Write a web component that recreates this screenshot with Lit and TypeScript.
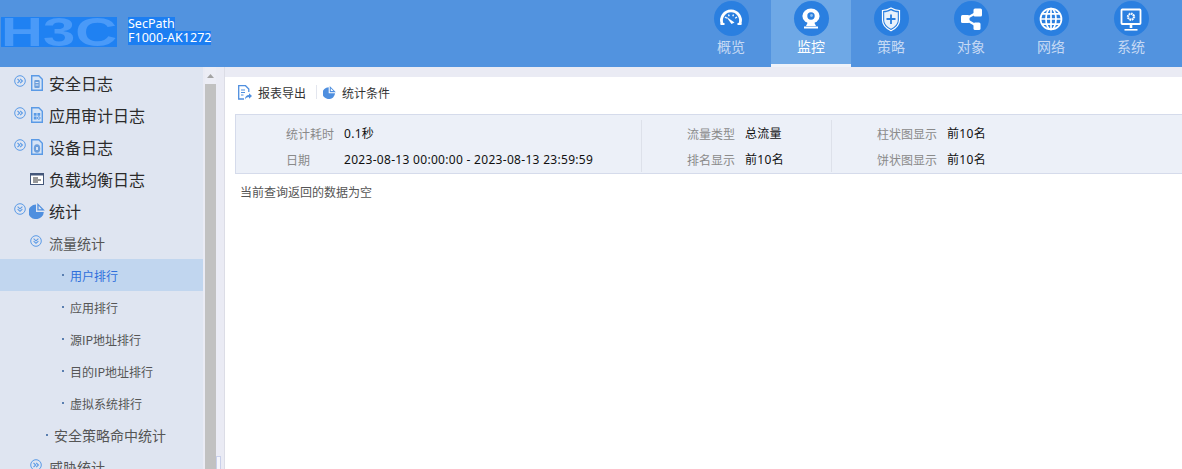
import { LitElement, html, css, svg } from "lit";
import { customElement } from "lit/decorators.js";

const navIcons: Record<string, any> = {
  gauge: svg`<path d="M6 19.500 A9.500 9.500 0 1 1 24 19.500" fill="none" stroke="#fff" stroke-width="2.800"/><path d="M4.500 20 H8.500 M21.500 20 H25.500" stroke="#fff" stroke-width="1.800"/><path d="M9 13 l1.800 1.300 M12.500 10.500 l0.700 1.800 M17.500 10.500 l-0.700 1.800 M21 13 l-1.800 1.300" stroke="#fff" stroke-width="1.300"/><path d="M10 12.500 L18.500 18.500 L15.500 20 Z" fill="#fff"/>`,
  cam: svg`<ellipse cx="15" cy="12" rx="8.600" ry="7.500" fill="#fff"/><circle cx="15" cy="12" r="3.700" fill="#2a7fe0"/><circle cx="15.500" cy="11.500" r="1.400" fill="#8fc0f2"/><path d="M11.500 19 h7 l1.500 3 h-10 Z" fill="#fff"/><rect x="8" y="22.500" width="14" height="2" fill="#fff"/>`,
  shield: svg`<path d="M15 4 C18 5.800 20.500 6.500 23.500 6.500 V16 C23.500 21 19.500 24.500 15 26.800 C10.500 24.500 6.500 21 6.500 16 V6.500 C9.500 6.500 12 5.800 15 4 Z" fill="none" stroke="#fff" stroke-width="1.200"/><path d="M15 6.300 C17.800 7.700 19.800 8.300 21.800 8.300 V16 C21.800 20 18.600 22.800 15 24.800 C11.400 22.800 8.200 20 8.200 16 V8.300 C10.200 8.300 12.200 7.700 15 6.300 Z" fill="#e8f1fb"/><path d="M15 10.500 V20 M10.500 15 H19.500" stroke="#2a7fe0" stroke-width="1.800"/>`,
  share: svg`<path d="M21 8.500 L9 15 L21 22" fill="none" stroke="#fff" stroke-width="2.200"/><rect x="17.500" y="4.500" width="8.500" height="8" rx="1.500" fill="#fff"/><rect x="5" y="11" width="8.500" height="8" rx="1.500" fill="#fff"/><rect x="17.500" y="18.500" width="7" height="7.500" rx="1.500" fill="#fff"/>`,
  globe: svg`<g fill="none" stroke="#fff" stroke-width="1.700"><circle cx="15" cy="15" r="10.500"/><ellipse cx="15" cy="15" rx="5" ry="10.500"/><path d="M15 4.500 V25.500 M4.500 15 H25.500 M6 9.800 H24 M6 20.200 H24"/></g>`,
  monitor: svg`<rect x="5.500" y="5.500" width="19" height="14.500" rx="0.800" fill="none" stroke="#fff" stroke-width="1.800"/><circle cx="15" cy="12.700" r="2.800" fill="none" stroke="#fff" stroke-width="1.800" stroke-dasharray="1.600 0.500"/><circle cx="15" cy="12.700" r="3.700" fill="none" stroke="#fff" stroke-width="1" stroke-dasharray="1.500 1.400"/><path d="M15 20 V24" stroke="#fff" stroke-width="2.600"/><rect x="8.500" y="25" width="13" height="1.600" fill="#fff"/>`,
};

const tabs = [
  ["概览", "gauge", false],
  ["监控", "cam", true],
  ["策略", "shield", false],
  ["对象", "share", false],
  ["网络", "globe", false],
  ["系统", "monitor", false],
] as const;

const arrowRight = svg`<svg width="12" height="12" viewBox="0 0 12 12"><circle cx="6" cy="6" r="5.300" fill="none" stroke="#5a9ae6" stroke-width="1"/><path d="M3.500 3.800 L5.700 6 L3.500 8.200 M6.200 3.800 L8.400 6 L6.200 8.200" fill="none" stroke="#5a9ae6" stroke-width="1.100"/></svg>`;
const arrowDown = svg`<svg width="12" height="12" viewBox="0 0 12 12"><circle cx="6" cy="6" r="5.300" fill="none" stroke="#5a9ae6" stroke-width="1"/><path d="M3.600 3.700 L6 5.800 L8.400 3.700 M3.600 6.200 L6 8.300 L8.400 6.200" fill="none" stroke="#5a9ae6" stroke-width="1.100"/></svg>`;

const docBase = svg`<path d="M0.700 0.700 H7.800 L11.300 4.200 V15.300 H0.700 Z" fill="#d6e4f6" stroke="#5a9ae6" stroke-width="1.400"/>`;
const docIcons: Record<string, any> = {
  shield: svg`<svg width="12" height="16" viewBox="0 0 12 16">${docBase}<rect x="3.300" y="5" width="5.400" height="8" rx="1" fill="#6d9fdc"/><path d="M4.500 7.500 H7.500 M4.500 10 H7.500" stroke="#dfe8f6"/></svg>`,
  grid: svg`<svg width="12" height="16" viewBox="0 0 12 16">${docBase}<path d="M2.800 6 h2.800 v2.800 h-2.800 Z M6.400 6 h2.800 v2.800 h-2.800 Z M2.800 9.600 h2.800 v2.800 h-2.800 Z" fill="#5a9ae6"/><circle cx="7.800" cy="11" r="1.300" fill="none" stroke="#5a9ae6"/></svg>`,
  lock: svg`<svg width="12" height="16" viewBox="0 0 12 16">${docBase}<ellipse cx="6" cy="9.500" rx="3.200" ry="4.300" fill="#6d9fdc"/><rect x="5" y="8" width="2" height="3" fill="#d6e4f6"/></svg>`,
  lb: svg`<svg width="14" height="12" viewBox="0 0 14 12"><rect x="0.500" y="0.500" width="13" height="11" fill="#fff" stroke="#44577a"/><rect x="0.500" y="0.500" width="13" height="2" fill="#44577a"/><path d="M3 5 H8 M3 7 H11 M3 9 H8" stroke="#333" stroke-width="1"/></svg>`,
};
const pie = (size: number, notch: string) => svg`<svg width="${size}" height="${size}" viewBox="0 0 16 16"><path d="M7 1.500 V9 H14.800 A7.700 7.300 0 1 1 7 1.500 Z" fill="#4f8fdf"/><path d="M8.300 0 L15.800 7.600 H8.300 Z" fill="#4f8fdf"/><path d="M9.600 2.800 L12.800 6.300 H9.600 Z" fill="${notch}"/></svg>`;

const exportIcon = svg`<svg width="14" height="15" viewBox="0 0 14 15"><path d="M6 14 H0.700 V0.700 H7.500 L10.800 4 V7" fill="none" stroke="#4f8fdf" stroke-width="1.300"/><path d="M3 5 H7 M3 7.500 H7 M3 10 H5.500" stroke="#4f8fdf" stroke-width="1.100"/><path d="M7 14.500 C7 11.500 8.500 10 11 10 V8.300 L14 11 L11 13.700 V12 C9.500 12 8 12.700 7 14.500 Z" fill="#4f8fdf"/></svg>`;

@customElement("app-root")
export class AppRoot extends LitElement {
  static styles = css`
    :host {
      display: block;
      position: relative;
      width: 1182px;
      height: 469px;
      overflow: hidden;
      font-family: "Noto Sans CJK SC", "Liberation Sans", sans-serif;
      background: #eaebf4;
    }
    .header {
      height: 67px;
      background: #5293df;
      display: flex;
      justify-content: space-between;
    }
    .brand {
      display: flex;
      align-items: flex-start;
      padding: 17px 0 0 1px;
      gap: 11px;
    }
    .logo {
      width: 116px;
      height: 30px;
      background: #1f81f2;
    }
    .logo span {
      display: block;
      width: 80px;
      transform: scaleX(1.45);
      transform-origin: left;
      color: #4a9af8;
      font: 700 40px/30px "Liberation Sans", sans-serif;
      white-space: nowrap;
    }
    .model {
      font: 12.500px/14px "Noto Sans", "Liberation Sans", sans-serif;
      color: #fff;
      display: flex;
      flex-direction: column;
      align-items: flex-start;
    }
    .model span {
      background: #1c7ef2;
      height: 14px;
      line-height: 14px;
    }
    .tabs {
      display: flex;
      margin-right: 11px;
    }
    .tab {
      width: 80px;
      height: 67px;
      box-sizing: border-box;
      display: flex;
      flex-direction: column;
      align-items: center;
      padding-top: 1px;
      color: #c5d9f4;
      font-size: 14px;
      line-height: 20px;
    }
    .tab.on {
      background: #6ea8e6;
      color: #fff;
      border-bottom: 3px solid #eef2fa;
    }
    .tab .disc {
      width: 35px;
      height: 35px;
      border-radius: 50%;
      background: #2a7fe0;
      display: flex;
      align-items: center;
      justify-content: center;
    }
    .body {
      display: flex;
      height: 402px;
    }
    .side {
      width: 203px;
      flex: none;
      background: #dfe5f1;
      overflow: hidden;
      box-sizing: border-box;
    }
    .row {
      height: 32px;
      display: flex;
      align-items: center;
      white-space: nowrap;
    }
    .row.l1 { font-size: 16px; color: #2b2b2b; }
    .row.l2 { font-size: 14px; color: #555; }
    .row.l3 { font-size: 12px; color: #555; }
    .row.active { background: #c1d6ef; color: #2f6fdc; }
    .chev { display: flex; width: 12px; height: 12px; margin-top: -4px; flex: none; }
    .ic { display: flex; justify-content: center; width: 16px; flex: none; margin-left: 3px; }
    .dot {
      width: 2px;
      height: 2px;
      background: #5a7fb0;
      flex: none;
      margin-right: 6px;
    }
    .gutter { width: 2px; flex: none; background: #eaebf4; }
    .bar {
      width: 11px;
      flex: none;
      background: #ecedf5;
      display: flex;
      flex-direction: column;
      align-items: stretch;
    }
    .bar .up {
      height: 17px;
      display: flex;
      justify-content: center;
      padding-top: 7px;
      box-sizing: border-box;
    }
    .bar .thumb { height: 385px; background: #c1c1c1; }
    .rail { width: 9px; flex: none; background: #eaebf4; border-right: 1px solid #dcdde6; box-sizing: border-box; }
    .main {
      flex: 1;
      margin-top: 10px;
      background: #fff;
      min-width: 0;
    }
    .tools {
      height: 30px;
      display: flex;
      align-items: center;
      padding-left: 13px;
      font-size: 12px;
      color: #333;
    }
    .tools .t { display: flex; align-items: center; gap: 6px; }
    .tools .sep { width: 1px; height: 14px; background: #e3e6ee; margin: 0 6px 0 10px; }
    .info {
      margin: 7px 0 0 10px;
      height: 60px;
      box-sizing: border-box;
      background: #ecf0f8;
      border: 1px solid #d5dbeb;
      border-right: none;
      display: flex;
      padding: 5px 0 1px;
      font-size: 12px;
    }
    .col {
      display: grid;
      grid-auto-rows: 26px;
      align-items: center;
      align-content: center;
      box-sizing: border-box;
    }
    .col.a { width: 405px; grid-template-columns: 98px 1fr; column-gap: 10px; }
    .col.b { width: 190px; grid-template-columns: 93px 1fr; column-gap: 10px; border-left: 1px solid #dde1ea; }
    .col.c { grid-template-columns: 105px 1fr; column-gap: 10px; border-left: 1px solid #dde1ea; }
    .k { color: #8a8a8a; text-align: right; }
    .col.a .k.d { text-align: left; padding-left: 50px; }
    .v {
      color: #111;
      white-space: nowrap;
      font-family: "Noto Sans", "Noto Sans CJK SC", sans-serif;
      letter-spacing: 0.300px;
    }
    .empty { margin: 10px 0 0 15px; font-size: 12px; line-height: 16px; color: #555; }
    .corner {
      position: absolute;
      left: 216px;
      top: 456px;
      width: 5px;
      height: 13px;
      box-sizing: border-box;
      border: 1px solid #c9d0ea;
      border-bottom: none;
      background: #f4f5fb;
    }
  `;

  private navRow(cls: string, pad: number, chev: any, icon: any, text: string, gap = 0) {
    return html`<div class="row ${cls}" style="padding-left:${pad}px">
      ${chev ? html`<span class="chev">${chev}</span>` : html`<span class="chev"></span>`}
      ${icon ? html`<span class="ic">${icon}</span>` : ""}
      <span style="margin-left:${gap}px">${text}</span>
    </div>`;
  }

  private leaf(pad: number, text: string, cls = "l3", active = false) {
    return html`<div class="row ${cls} ${active ? "active" : ""}" style="padding-left:${pad}px">
      <span class="dot"></span><span>${text}</span>
    </div>`;
  }

  render() {
    return html`
      <div class="header">
        <div class="brand">
          <div class="logo"><span>H3C</span></div>
          <div class="model"><span>SecPath</span><span>F1000-AK1272</span></div>
        </div>
        <div class="tabs">
          ${tabs.map(
            ([label, icon, on]) => html`<div class="tab ${on ? "on" : ""}">
              <div class="disc"><svg width="30" height="30" viewBox="0 0 30 30">${navIcons[icon]}</svg></div>
              <span>${label}</span>
            </div>`
          )}
        </div>
      </div>
      <div class="body">
        <div class="side">
          ${this.navRow("l1", 14, arrowRight, docIcons.shield, "安全日志", 4)}
          ${this.navRow("l1", 14, arrowRight, docIcons.grid, "应用审计日志", 4)}
          ${this.navRow("l1", 14, arrowRight, docIcons.lock, "设备日志", 4)}
          ${this.navRow("l1", 14, null, docIcons.lb, "负载均衡日志", 4)}
          ${this.navRow("l1", 14, arrowDown, pie(16, "#dfe5f1"), "统计", 4)}
          ${this.navRow("l2", 30, arrowDown, null, "流量统计", 7)}
          ${this.leaf(62, "用户排行", "l3", true)}
          ${this.leaf(62, "应用排行")}
          ${this.leaf(62, "源IP地址排行")}
          ${this.leaf(62, "目的IP地址排行")}
          ${this.leaf(62, "虚拟系统排行")}
          ${this.leaf(46, "安全策略命中统计", "l2")}
          ${this.navRow("l2", 30, arrowRight, null, "威胁统计", 7)}
        </div>
        <div class="gutter"></div>
        <div class="bar">
          <div class="up"><svg width="7" height="4" viewBox="0 0 7 4"><path d="M3.500 0 L7 4 H0 Z" fill="#a3a3a3"/></svg></div>
          <div class="thumb"></div>
        </div>
        <div class="rail"></div>
        <div class="main">
          <div class="tools">
            <span class="t">${exportIcon}<span>报表导出</span></span>
            <span class="sep"></span>
            <span class="t">${pie(13, "#ffffff")}<span>统计条件</span></span>
          </div>
          <div class="info">
            <div class="col a">
              <span class="k">统计耗时</span><span class="v">0.1秒</span>
              <span class="k d">日期</span><span class="v">2023-08-13 00:00:00 - 2023-08-13 23:59:59</span>
            </div>
            <div class="col b">
              <span class="k">流量类型</span><span class="v">总流量</span>
              <span class="k">排名显示</span><span class="v">前10名</span>
            </div>
            <div class="col c">
              <span class="k">柱状图显示</span><span class="v">前10名</span>
              <span class="k">饼状图显示</span><span class="v">前10名</span>
            </div>
          </div>
          <div class="empty">当前查询返回的数据为空</div>
        </div>
      </div>
      <div class="corner"></div>
    `;
  }
}
